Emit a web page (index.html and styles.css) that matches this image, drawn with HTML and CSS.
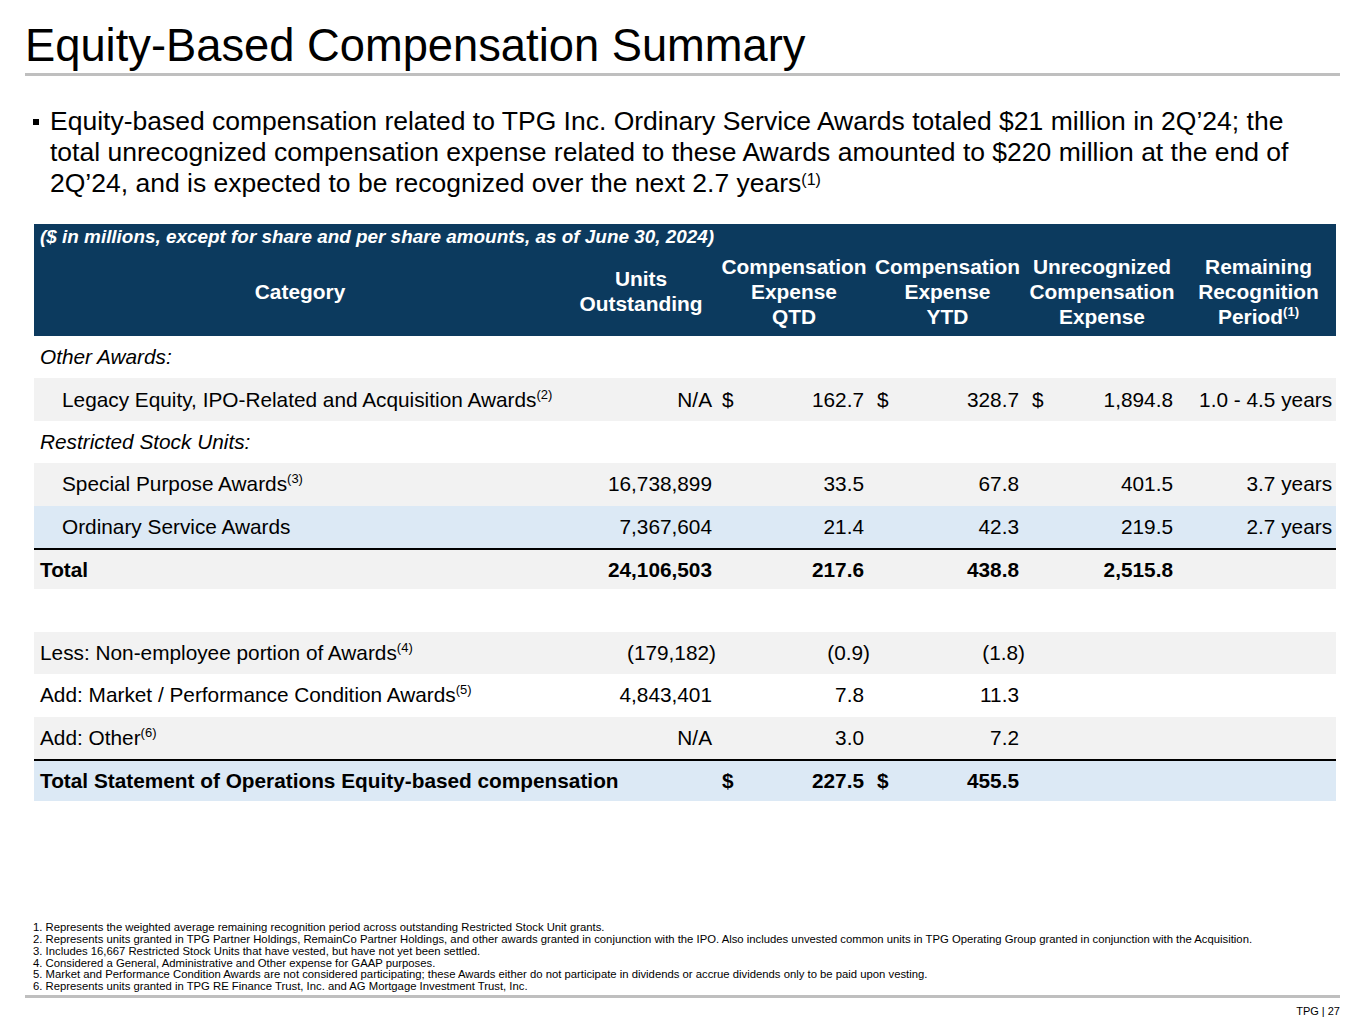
FILE: index.html
```html
<!DOCTYPE html>
<html>
<head>
<meta charset="utf-8">
<link rel="stylesheet" href="styles.css">
</head>
<body>
<div class="page">
  <h1 class="title">Equity-Based Compensation Summary</h1>
  <div class="bullet">
    <span class="dot"></span>
    <p>Equity-based compensation related to TPG Inc. Ordinary Service Awards totaled $21 million in 2Q’24; the total unrecognized compensation expense related to these Awards amounted to $220 million at the end of 2Q’24, and is expected to be recognized over the next 2.7 years<sup>(1)</sup></p>
  </div>
  <table class="tbl">
    <colgroup>
      <col class="c1"><col class="c2"><col class="c3"><col class="c4"><col class="c5"><col class="c6">
    </colgroup>
    <thead>
      <tr class="cap"><th colspan="6">($ in millions, except for share and per share amounts, as of June 30, 2024)</th></tr>
      <tr class="hdr">
        <th>Category</th>
        <th>Units<br>Outstanding</th>
        <th class="sh">Compensation<br>Expense<br>QTD</th>
        <th class="sh">Compensation<br>Expense<br>YTD</th>
        <th class="sh">Unrecognized<br>Compensation<br>Expense</th>
        <th class="sh">Remaining<br>Recognition<br>Period<sup>(1)</sup></th>
      </tr>
    </thead>
    <tbody>
      <tr class="w"><td class="sec" colspan="6">Other Awards:</td></tr>
      <tr class="g">
        <td class="ind">Legacy Equity, IPO-Related and Acquisition Awards<sup>(2)</sup></td>
        <td class="n">N/A</td>
        <td class="n"><span class="cur">$</span>162.7</td>
        <td class="n"><span class="cur">$</span>328.7</td>
        <td class="n"><span class="cur">$</span>1,894.8</td>
        <td class="n">1.0 - 4.5 years</td>
      </tr>
      <tr class="w"><td class="sec" colspan="6">Restricted Stock Units:</td></tr>
      <tr class="g">
        <td class="ind">Special Purpose Awards<sup>(3)</sup></td>
        <td class="n">16,738,899</td>
        <td class="n">33.5</td>
        <td class="n">67.8</td>
        <td class="n">401.5</td>
        <td class="n">3.7 years</td>
      </tr>
      <tr class="b">
        <td class="ind">Ordinary Service Awards</td>
        <td class="n">7,367,604</td>
        <td class="n">21.4</td>
        <td class="n">42.3</td>
        <td class="n">219.5</td>
        <td class="n">2.7 years</td>
      </tr>
      <tr class="g tot">
        <td>Total</td>
        <td class="n">24,106,503</td>
        <td class="n">217.6</td>
        <td class="n">438.8</td>
        <td class="n">2,515.8</td>
        <td class="n"></td>
      </tr>
      <tr class="w"><td colspan="6">&nbsp;</td></tr>
      <tr class="g">
        <td>Less: Non-employee portion of Awards<sup>(4)</sup></td>
        <td class="n"><span class="neg">(179,182)</span></td>
        <td class="n"><span class="neg n2">(0.9)</span></td>
        <td class="n"><span class="neg n2">(1.8)</span></td>
        <td class="n"></td>
        <td class="n"></td>
      </tr>
      <tr class="w">
        <td>Add: Market / Performance Condition Awards<sup>(5)</sup></td>
        <td class="n">4,843,401</td>
        <td class="n">7.8</td>
        <td class="n">11.3</td>
        <td class="n"></td>
        <td class="n"></td>
      </tr>
      <tr class="g">
        <td>Add: Other<sup>(6)</sup></td>
        <td class="n">N/A</td>
        <td class="n">3.0</td>
        <td class="n">7.2</td>
        <td class="n"></td>
        <td class="n"></td>
      </tr>
      <tr class="b tot">
        <td>Total Statement of Operations Equity-based compensation</td>
        <td class="n"></td>
        <td class="n"><span class="cur">$</span>227.5</td>
        <td class="n"><span class="cur">$</span>455.5</td>
        <td class="n"></td>
        <td class="n"></td>
      </tr>
    </tbody>
  </table>
  <div class="spacer"></div>
  <ol class="notes">
    <li>1. Represents the weighted average remaining recognition period across outstanding Restricted Stock Unit grants.</li>
    <li>2. Represents units granted in TPG Partner Holdings, RemainCo Partner Holdings, and other awards granted in conjunction with the IPO. Also includes unvested common units in TPG Operating Group granted in conjunction with the Acquisition.</li>
    <li>3. Includes 16,667 Restricted Stock Units that have vested, but have not yet been settled.</li>
    <li>4. Considered a General, Administrative and Other expense for GAAP purposes.</li>
    <li>5. Market and Performance Condition Awards are not considered participating; these Awards either do not participate in dividends or accrue dividends only to be paid upon vesting.</li>
    <li>6. Represents units granted in TPG RE Finance Trust, Inc. and AG Mortgage Investment Trust, Inc.</li>
  </ol>
  <div class="foot">TPG | 27</div>
</div>
</body>
</html>
```

FILE: styles.css
```css
html, body {
  margin: 0;
  padding: 0;
  background: #ffffff;
}
body {
  font-family: "Liberation Sans", Arial, sans-serif;
  color: #000;
  width: 1365px;
  height: 1024px;
  overflow: hidden;
}
.page {
  display: flex;
  flex-direction: column;
  height: 1024px;
  padding: 0 25px 0 25px;
  box-sizing: border-box;
}
.title {
  margin: 0;
  padding-top: 20px;
  font-size: 45.3px;
  font-weight: normal;
  line-height: 52px;
  border-bottom: 3px solid #bfbfbf;
  height: 53px;
}
.bullet {
  display: flex;
  margin-top: 30px;
  padding-left: 8px;
}
.dot {
  flex: none;
  width: 6px;
  height: 6px;
  background: #000;
  margin-top: 13px;
  margin-right: 11px;
}
.bullet p {
  margin: 0;
  font-size: 26.5px;
  line-height: 31px;
}
.bullet sup {
  font-size: 16px;
  line-height: 0;
  vertical-align: 7px;
}
.tbl {
  margin-top: 25px;
  margin-left: 9px;
  width: 1302px;
  border-collapse: collapse;
  table-layout: fixed;
  font-size: 20.8px;
}
.c1 { width: 532px; }
.c2 { width: 150px; }
.c3 { width: 152px; }
.c4 { width: 155px; }
.c5 { width: 154px; }
.c6 { width: 159px; }
thead th {
  background: #0c3a5e;
  color: #fff;
  font-weight: bold;
}
.cap th {
  text-align: left;
  font-style: italic;
  font-size: 18.9px;
  padding: 2px 6px 0;
  height: 22px;
  line-height: 20px;
  white-space: nowrap;
}
.hdr th {
  font-size: 20.9px;
  line-height: 25px;
  height: 86px;
  padding: 0 0 2px;
  vertical-align: middle;
  text-align: center;
  white-space: nowrap;
}
.hdr th.sh { padding-left: 4px; }
.hdr sup, .tbl td sup {
  font-size: 13px;
  line-height: 0;
  vertical-align: 8px;
}
.tbl td {
  height: 42.4px;
  padding: 0 4px 0 6px;
  white-space: nowrap;
  vertical-align: middle;
}
.tbl td.n:nth-child(4),
.tbl td.n:nth-child(5) { padding-left: 9px; }
.tbl td.ind { padding-left: 28px; }
.tbl td.sec { font-style: italic; }
.tbl td.n { text-align: right; }
.cur { float: left; }
.neg { margin-right: -4px; }
.neg.n2 { margin-right: -6px; }
.g td { background: #f2f2f2; }
.w td { background: #ffffff; }
.b td { background: #dce9f5; }
.tot td { font-weight: bold; border-top: 2px solid #000; height: 39.5px; }
.spacer { flex: 1; }
.notes {
  list-style: none;
  margin: 0;
  padding: 0 0 2px 8px;
  font-size: 11.3px;
  line-height: 11.8px;
  border-bottom: 3px solid #bfbfbf;
}
.foot {
  text-align: right;
  font-size: 11px;
  padding: 7px 0 7px;
  line-height: 12px;
}
```
